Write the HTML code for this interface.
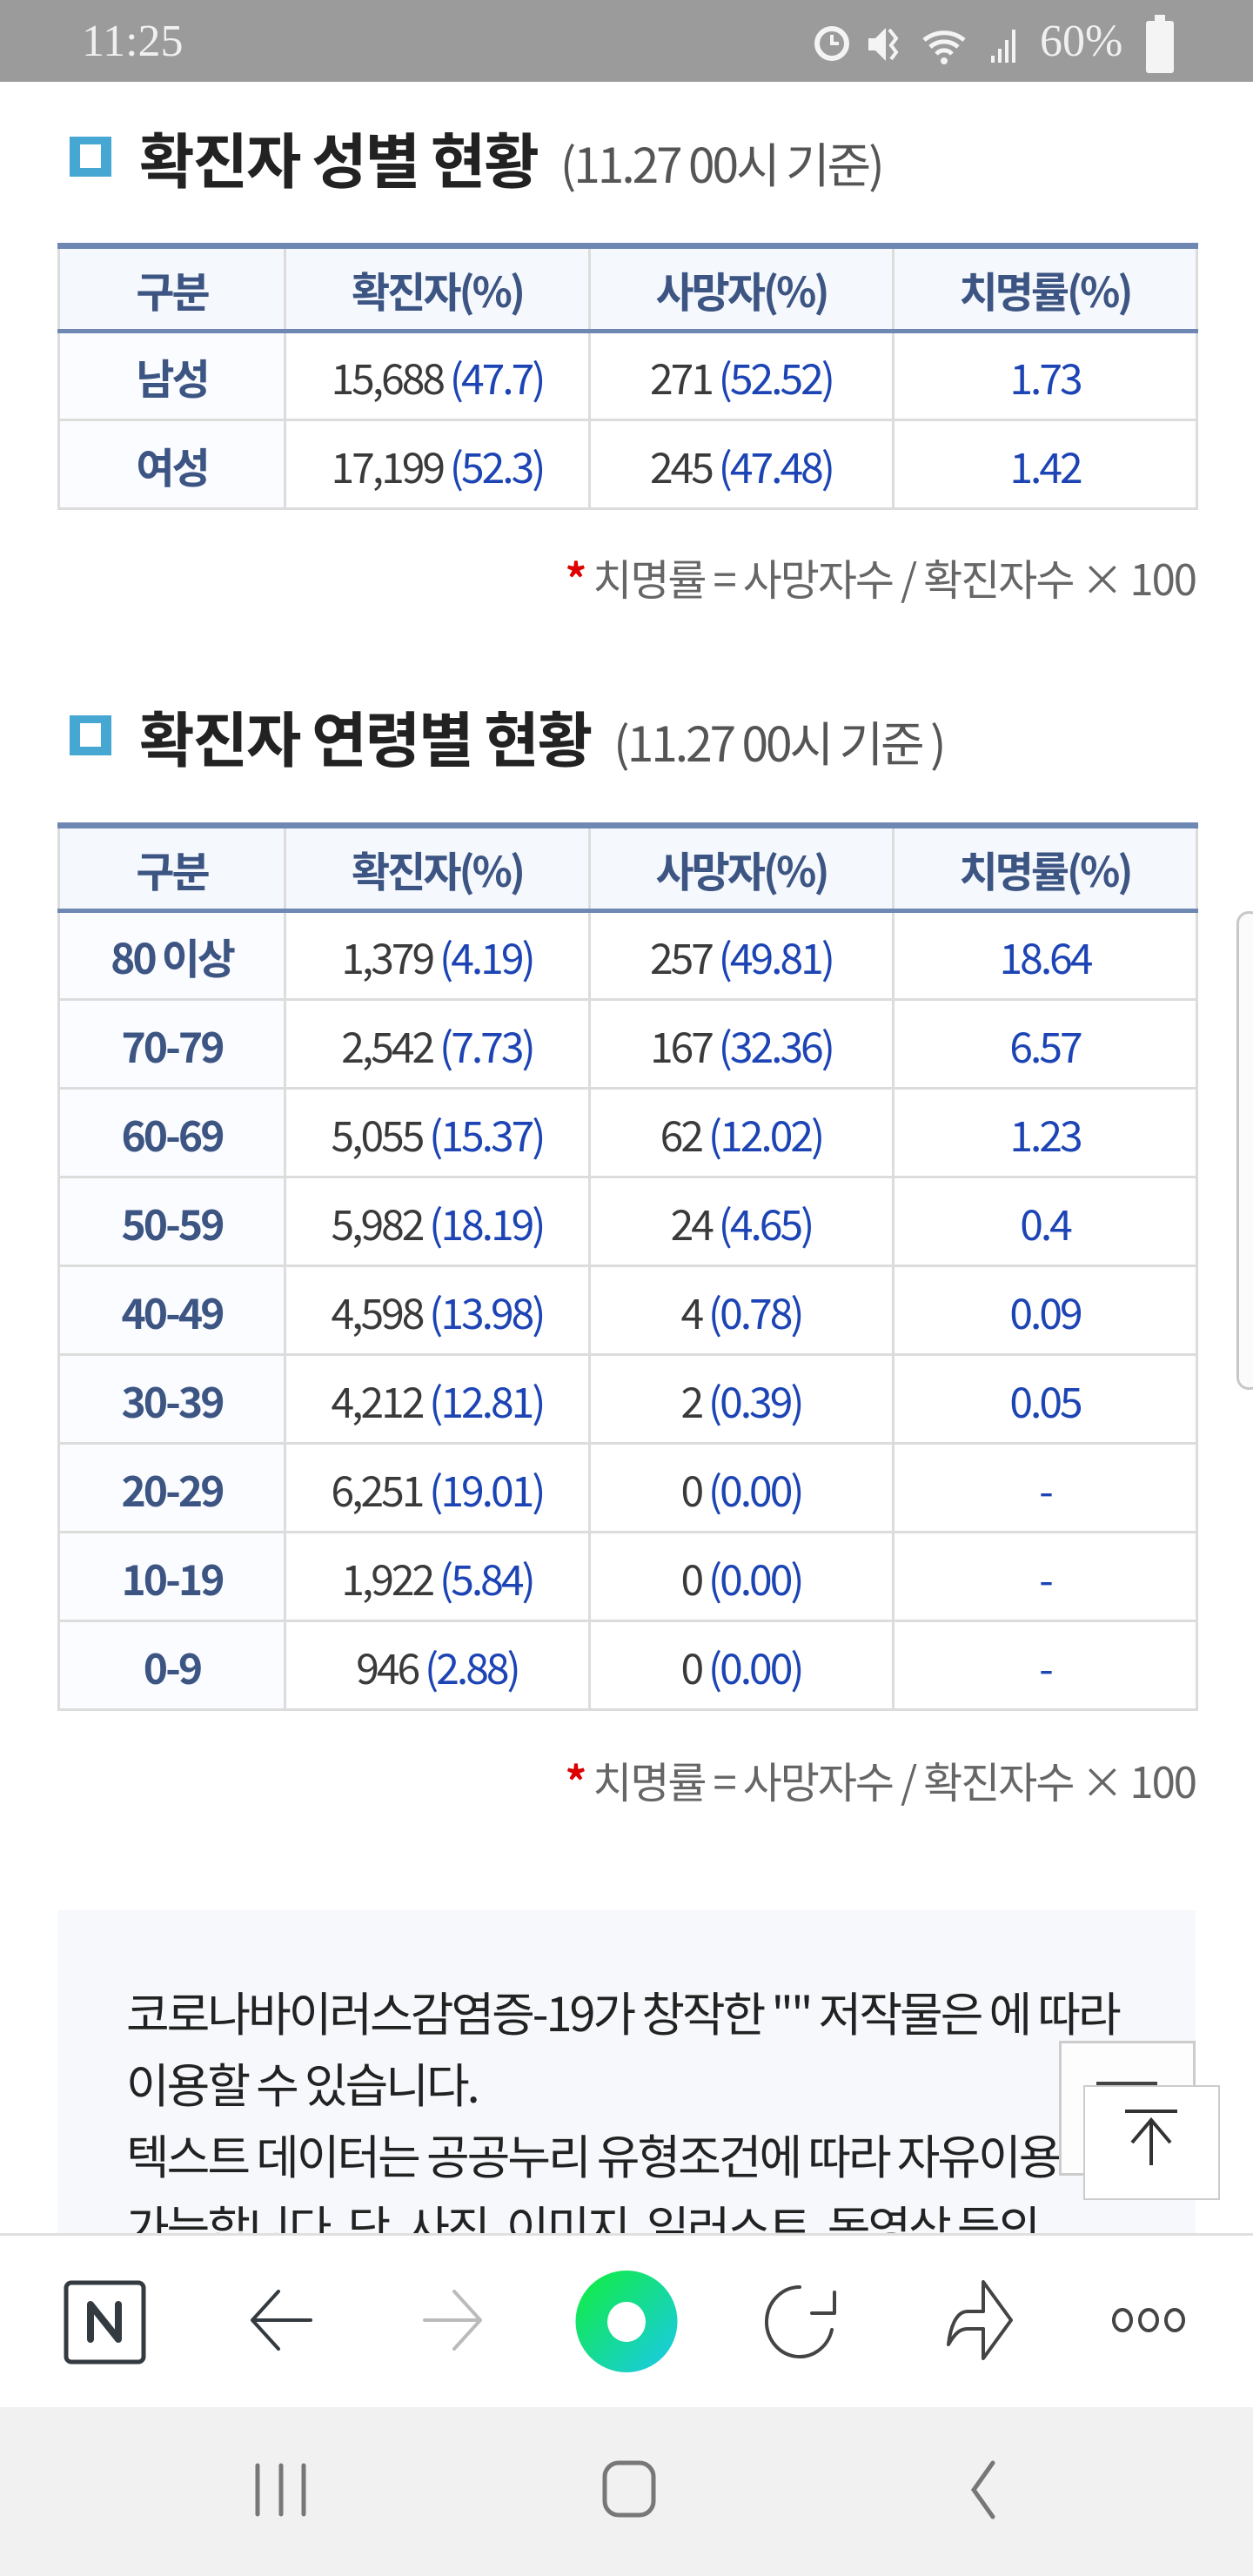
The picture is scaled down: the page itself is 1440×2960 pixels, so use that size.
<!DOCTYPE html>
<html><head><meta charset="utf-8">
<style>
*{margin:0;padding:0;box-sizing:border-box}
html,body{width:1440px;height:2960px;overflow:hidden;background:#fff;font-family:"Liberation Sans","Noto Sans CJK KR",sans-serif}
.abs{position:absolute}
.status{left:0;top:0;width:1440px;height:94px;background:#9b9b9b;color:#f4f4f4}
.h{font-family:"Noto Sans CJK KR",sans-serif;font-weight:700;font-size:69px;color:#222;letter-spacing:-2px;white-space:nowrap;line-height:90px}
.h small{font-weight:400;font-size:55px;color:#555;letter-spacing:-3px;margin-left:26px}
.icon{width:48px;height:46px;background:#46a7d3}
.icon:after{content:"";position:absolute;left:12px;top:9px;width:24px;height:27px;background:#fff}
table{position:absolute;left:66px;width:1308px;border-collapse:collapse;table-layout:fixed;font-family:"Noto Sans CJK KR",sans-serif;border-top:7px solid #6f87b3}
td,th{border:3px solid #dcdcdc;text-align:center;height:102px;font-size:48px;letter-spacing:-3px;color:#3a3a3a;font-weight:400;padding:0}
th{background:#f5f8fd;color:#3d5583;font-weight:700;border-bottom:5px solid #6f87b3;border-top:none;height:98px}
td.l{font-weight:700;color:#3d5583;background:#fbfcff}
b{font-weight:400;color:#1c44b4}
td.r{color:#1c44b4}
.foot{font-family:"Noto Sans CJK KR",sans-serif;font-size:49px;color:#666;letter-spacing:-2px;right:66px;white-space:nowrap}
.foot span{color:#d00;font-weight:700}
.box{left:66px;top:2195px;width:1308px;height:400px;background:#f6f8fc}
.bt{font-family:"Noto Sans CJK KR",sans-serif;font-size:54px;color:#222;letter-spacing:-3px;left:145px;white-space:nowrap;line-height:82px}
</style></head><body>
<div class="abs status">
 <div class="abs" style="left:94px;top:18px;font-family:'Liberation Serif',serif;font-size:52px;color:#f0f0f0">11:25</div>
 <div class="abs" style="left:1195px;top:18px;font-family:'Liberation Serif',serif;font-size:52px;color:#f0f0f0">60%</div>
 <svg class="abs" style="left:930px;top:22px" width="260" height="56" viewBox="0 0 260 56" fill="#f4f4f4" stroke="#f4f4f4">
  <circle cx="26" cy="28" r="17" fill="none" stroke-width="6"/><path d="M26 18v10h8" fill="none" stroke-width="4"/>
  <path d="M68 22h8l12-12v38l-12-12h-8z" stroke="none"/><path d="M92 12l8 10-6 8 6 8-6 8" fill="none" stroke-width="4"/>
  <path d="M132 24a36 36 0 0 1 46 0M139 32a24 24 0 0 1 32 0M146 40a12 12 0 0 1 18 0" fill="none" stroke-width="5"/><circle cx="155" cy="48" r="4" stroke="none"/>
  <rect x="209" y="42" width="4" height="8" stroke="none"/><rect x="217" y="34" width="4" height="16" stroke="none"/><rect x="225" y="24" width="4" height="26" stroke="none"/><rect x="233" y="12" width="4" height="38" stroke="none"/>
 </svg>
 <div class="abs" style="left:1317px;top:24px;width:32px;height:60px;background:#f4f4f4;border-radius:3px"></div>
 <div class="abs" style="left:1327px;top:17px;width:12px;height:8px;background:#f4f4f4"></div>
</div>

<div class="abs icon" style="left:80px;top:157px"></div>
<div class="abs h" style="left:160px;top:135px">확진자 성별 현황<small>(11.27 00시 기준)</small></div>

<table style="top:279px">
<colgroup><col style="width:260px"><col style="width:350px"><col style="width:349px"><col style="width:349px"></colgroup>
<tr><th>구분</th><th>확진자(%)</th><th>사망자(%)</th><th>치명률(%)</th></tr>
<tr><td class="l">남성</td><td>15,688 <b>(47.7)</b></td><td>271 <b>(52.52)</b></td><td class="r">1.73</td></tr>
<tr><td class="l">여성</td><td>17,199 <b>(52.3)</b></td><td>245 <b>(47.48)</b></td><td class="r">1.42</td></tr>
</table>
<div class="abs foot" style="top:628px"><span>*</span> 치명률 = 사망자수 / 확진자수 × 100</div>

<div class="abs icon" style="left:80px;top:822px"></div>
<div class="abs h" style="left:160px;top:800px">확진자 연령별 현황<small>(11.27 00시 기준 )</small></div>

<table style="top:945px">
<colgroup><col style="width:260px"><col style="width:350px"><col style="width:349px"><col style="width:349px"></colgroup>
<tr><th>구분</th><th>확진자(%)</th><th>사망자(%)</th><th>치명률(%)</th></tr>
<tr><td class="l">80 이상</td><td>1,379 <b>(4.19)</b></td><td>257 <b>(49.81)</b></td><td class="r">18.64</td></tr>
<tr><td class="l">70-79</td><td>2,542 <b>(7.73)</b></td><td>167 <b>(32.36)</b></td><td class="r">6.57</td></tr>
<tr><td class="l">60-69</td><td>5,055 <b>(15.37)</b></td><td>62 <b>(12.02)</b></td><td class="r">1.23</td></tr>
<tr><td class="l">50-59</td><td>5,982 <b>(18.19)</b></td><td>24 <b>(4.65)</b></td><td class="r">0.4</td></tr>
<tr><td class="l">40-49</td><td>4,598 <b>(13.98)</b></td><td>4 <b>(0.78)</b></td><td class="r">0.09</td></tr>
<tr><td class="l">30-39</td><td>4,212 <b>(12.81)</b></td><td>2 <b>(0.39)</b></td><td class="r">0.05</td></tr>
<tr><td class="l">20-29</td><td>6,251 <b>(19.01)</b></td><td>0 <b>(0.00)</b></td><td class="r">-</td></tr>
<tr><td class="l">10-19</td><td>1,922 <b>(5.84)</b></td><td>0 <b>(0.00)</b></td><td class="r">-</td></tr>
<tr><td class="l">0-9</td><td>946 <b>(2.88)</b></td><td>0 <b>(0.00)</b></td><td class="r">-</td></tr>
</table>
<div class="abs foot" style="top:2010px"><span>*</span> 치명률 = 사망자수 / 확진자수 × 100</div>

<div class="abs" style="left:1421px;top:1047px;width:30px;height:550px;border:3px solid #c8c8c8;border-radius:14px;background:#fbfbfb"></div>

<div class="abs box"></div>
<div class="abs bt" style="top:2270px">코로나바이러스감염증-19가 창작한 "" 저작물은 에 따라<br>이용할 수 있습니다.<br>텍스트 데이터는 공공누리 유형조건에 따라 자유이용<br>가능합니다. 단, 사진, 이미지, 일러스트, 동영상 등의</div>

<div class="abs" style="left:1217px;top:2345px;width:157px;height:155px;border:3px solid #ccc;background:#fdfdfd"></div>
<div class="abs" style="left:1260px;top:2392px;width:70px;height:5px;background:#444"></div>
<div class="abs" style="left:1245px;top:2396px;width:157px;height:132px;border:2px solid #ccc;background:#fff"></div>
<svg class="abs" style="left:1245px;top:2396px" width="157" height="132" viewBox="0 0 157 132" fill="none" stroke="#333" stroke-width="4"><path d="M48 30h60M78 92V42M56 66l22-26 22 26"/></svg>

<div class="abs" style="left:0;top:2566px;width:1440px;height:200px;background:#fff;border-top:3px solid #e0e0e0"></div>
<svg class="abs" style="left:0;top:2566px" width="1440" height="200" viewBox="0 0 1440 200" fill="none" stroke-linecap="round" stroke-linejoin="round">
 <rect x="76" y="57" width="89" height="91" rx="6" stroke="#333a40" stroke-width="5"/>
 <path d="M104 122V82l32 40V82" stroke="#333a40" stroke-width="8"/>
 <g transform="translate(0,32)">
 <path d="M320 35l-30 33 30 33M290 68h67" stroke="#333a40" stroke-width="4"/>
 <path d="M522 35l30 33-30 33M488 68h64" stroke="#bbb" stroke-width="4"/>
 <path d="M1130 78v34l32-44-32-44v34h-18c-14 0-20 20-22 38 8-14 14-18 22-18z" stroke="#444" stroke-width="4"/>
 <ellipse cx="1290" cy="68" rx="10" ry="12" stroke="#444" stroke-width="4"/><ellipse cx="1320" cy="68" rx="10" ry="12" stroke="#444" stroke-width="4"/><ellipse cx="1350" cy="68" rx="10" ry="12" stroke="#444" stroke-width="4"/>
 </g>
 <path d="M919 62A38 40 0 1 0 956 111" stroke="#444" stroke-width="4"/><path d="M959 68V92H933" stroke="#444" stroke-width="4"/>
 <defs><linearGradient id="g" x1="0" y1="0" x2="1" y2="1"><stop offset="0" stop-color="#11ee3a"/><stop offset="1" stop-color="#1ac8ee"/></linearGradient></defs>
 <path fill="url(#g)" fill-rule="evenodd" stroke="none" d="M720 43a58 58 0 1 1 0 117a58 58 0 1 1 0-117zM720 79a22 23 0 1 0 0 46a22 23 0 1 0 0-46z"/>
</svg>

<div class="abs" style="left:0;top:2766px;width:1440px;height:194px;background:#f1f1f1"></div>
<svg class="abs" style="left:0;top:2766px" width="1440" height="194" viewBox="0 0 1440 194" fill="none" stroke="#777" stroke-width="5" stroke-linecap="round">
 <path d="M296 67v56M323 67v56M349 67v56"/>
 <rect x="695" y="64" width="56" height="60" rx="16"/>
 <path d="M1141 64l-22 31 22 31"/>
</svg>
</body></html>
